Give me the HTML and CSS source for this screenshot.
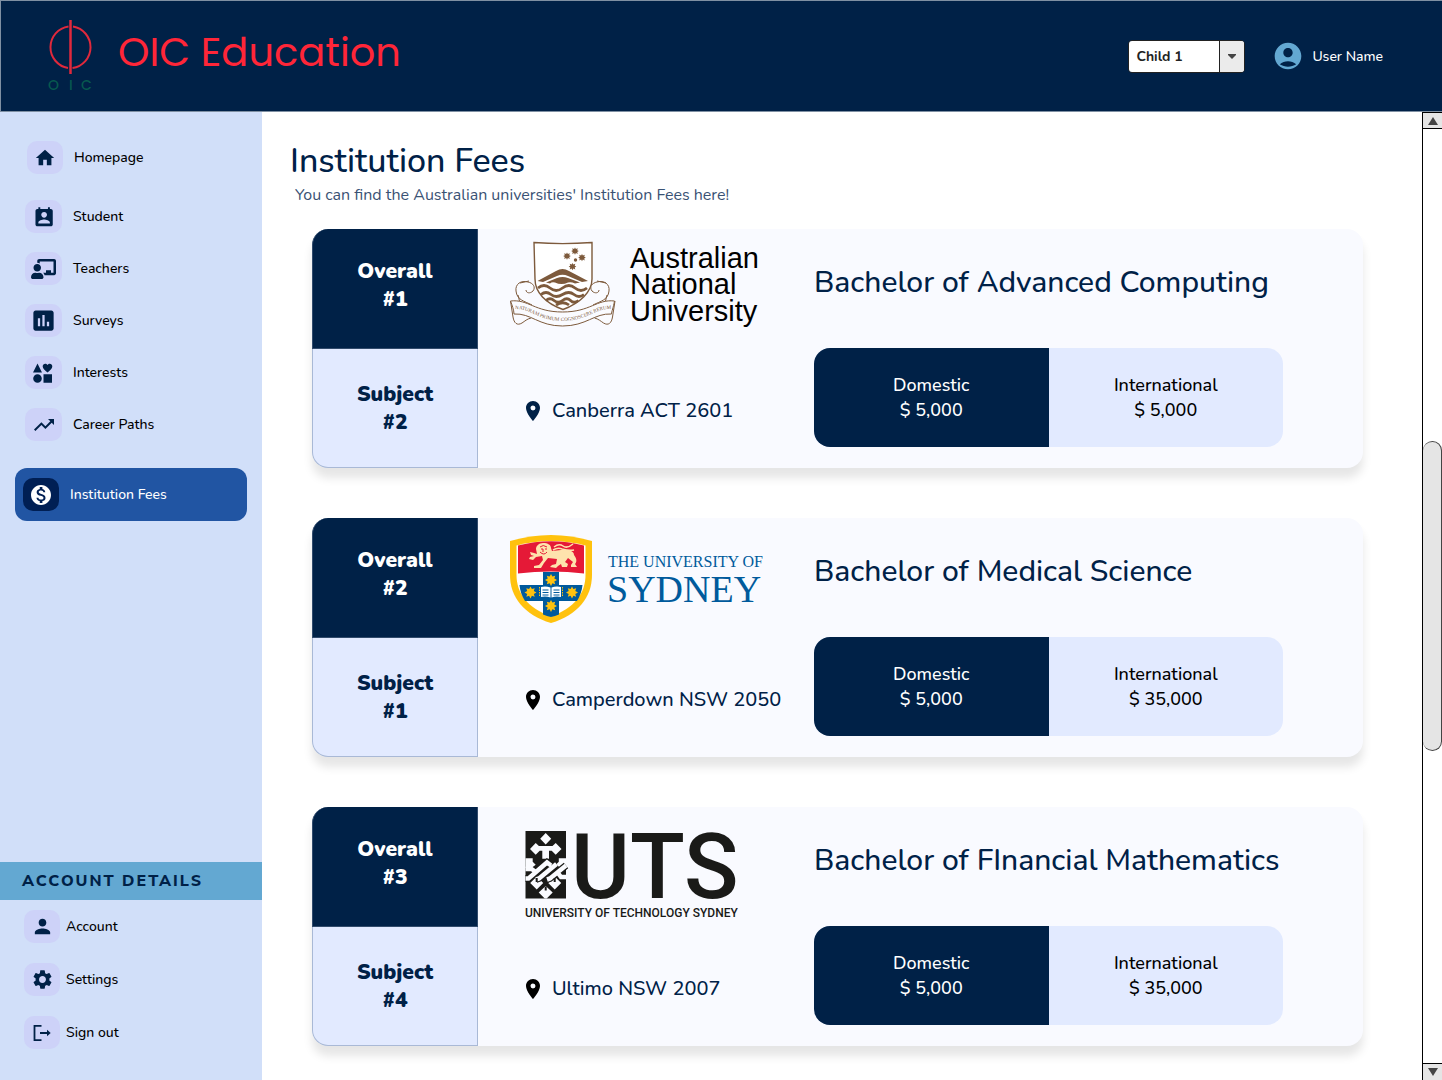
FILE: index.html
```html
<!DOCTYPE html>
<html lang="en">
<head>
<meta charset="utf-8">
<meta name="viewport" content="width=device-width, initial-scale=1">
<title>OIC Education - Institution Fees</title>
<link rel="stylesheet" href="styles.css">
</head>
<body>
<header class="topbar">
  <a class="brand" href="#">
    <svg class="brand-mark" viewBox="0 0 46 76" aria-hidden="true">
      <g fill="none" stroke="#e0293c" stroke-width="2"><path d="M20.500 6.500A21 21 0 0 0 20 48"/><path d="M25 6.500A21 21 0 0 1 24.500 48"/><path d="M22.500 0v54" stroke-width="2.500"/></g>
      <text class="brand-mark-text" x="0" y="70">O</text><text class="brand-mark-text" x="21" y="70">I</text><text class="brand-mark-text" x="33" y="70">C</text>
    </svg>
    <span class="brand-name">OIC Education</span>
  </a>
  <div class="select-box">
    <select class="child-select" aria-label="Child"><option>Child 1</option></select>
    <span class="select-arrow"><svg width="8" height="5" viewBox="0 0 8 5"><path d="M0 0h8v1L4 5 0 1z" fill="#444"/></svg></span>
  </div>
  <a class="user" href="#">
    <svg width="32" height="32" viewBox="0 0 24 24" fill="#63a8d2" aria-hidden="true"><path d="M12 2C6.480 2 2 6.480 2 12s4.480 10 10 10 10-4.480 10-10S17.520 2 12 2zm0 4c1.930 0 3.500 1.570 3.500 3.500S13.930 13 12 13s-3.500-1.570-3.500-3.500S10.070 6 12 6zm0 14c-2.030 0-4.430-.820-6.140-1.880C7.550 16.800 9.680 16 12 16s4.450.800 6.140 2.120C16.430 19.180 14.030 20 12 20z"/></svg>
    <span>User Name</span>
  </a>
</header>
<div class="shell">
  <aside class="sidebar">
    <nav class="nav">
      <a class="nav-item nav-home" href="#"><span class="nav-icon"><svg width="22" height="22" viewBox="0 0 24 24"><path d="M10 20v-6h4v6h5v-8h3L12 3 2 12h3v8z"/></svg></span>Homepage</a>
      <a class="nav-item" href="#"><span class="nav-icon"><svg width="24" height="24" viewBox="0 0 24 24"><path d="M19 3h-1V1h-2v2H8V1H6v2H5c-1.110 0-2 .900-2 2v14c0 1.100.890 2 2 2h14c1.100 0 2-.900 2-2V5c0-1.100-.900-2-2-2zm-7 3c1.660 0 3 1.340 3 3s-1.340 3-3 3-3-1.340-3-3 1.340-3 3-3zm6 12H6v-1c0-2 4-3.100 6-3.100s6 1.100 6 3.100v1z" transform="translate(.6 1.200) scale(.96)"/></svg></span>Student</a>
      <a class="nav-item" href="#"><span class="nav-icon"><svg width="25" height="20" viewBox="0 0 640 512"><path d="M208 352c-2.400 0-4.800.400-7.100 1.100C188 357.300 174.400 360 160 360s-28-2.700-40.900-6.900c-2.300-.700-4.700-1.100-7.100-1.100C49.900 352-.300 402.500 0 464.600.100 490.900 21.700 512 48 512h224c26.300 0 47.900-21.100 48-47.400.300-62.100-49.900-112.600-112-112.600zm-48-32c53 0 96-43 96-96s-43-96-96-96-96 43-96 96 43 96 96 96zM592 0H208c-26.500 0-48 22.200-48 49.600V96c23.400 0 45.100 6.800 64 17.800V64h352v288h-64v-64H384v64h-76.200c19.100 16.700 33.100 38.700 39.700 64H592c26.500 0 48-22.200 48-49.600V49.600C640 22.200 618.500 0 592 0z"/></svg></span>Teachers</a>
      <a class="nav-item" href="#"><span class="nav-icon"><svg width="27" height="27" viewBox="0 0 24 24"><path d="M19 3H5c-1.100 0-2 .900-2 2v14c0 1.100.900 2 2 2h14c1.100 0 2-.900 2-2V5c0-1.100-.900-2-2-2zM9 17H7v-7h2v7zm4 0h-2V7h2v10zm4 0h-2v-4h2v4z"/></svg></span>Surveys</a>
      <a class="nav-item" href="#"><span class="nav-icon"><svg width="22" height="22" viewBox="0 0 22 22"><path d="M4.500 1.500l4.500 9H0zM14.500 10.500c-2.500-2-4.800-3.800-4.800-6 0-2.800 3.300-3.600 4.800-1.400 1.500-2.200 4.800-1.400 4.800 1.400 0 2.200-2.300 4-4.800 6zM4.500 12.200a4.300 4.300 0 1 1 0 8.600 4.300 4.300 0 0 1 0-8.600zM10.500 12.200h8.500v8.500h-8.500z"/></svg></span>Interests</a>
      <a class="nav-item" href="#"><span class="nav-icon"><svg width="24" height="24" viewBox="0 0 24 24"><path d="M16 6l2.290 2.290-4.880 4.880-4-4L2 16.590 3.410 18l6-6 4 4 6.300-6.290L22 12V6z"/></svg></span>Career Paths</a>
      <a class="nav-item nav-active" href="#" aria-current="page"><span class="nav-icon"><svg width="24" height="24" viewBox="0 0 24 24"><path d="M12 2C6.480 2 2 6.480 2 12s4.480 10 10 10 10-4.480 10-10S17.520 2 12 2zm1.410 16.090V20h-2.670v-1.930c-1.710-.360-3.160-1.460-3.270-3.400h1.960c.100 1.050.820 1.870 2.650 1.870 1.960 0 2.400-.980 2.400-1.590 0-.830-.440-1.610-2.670-2.140-2.480-.600-4.180-1.620-4.180-3.670 0-1.720 1.390-2.840 3.110-3.210V4h2.670v1.950c1.860.450 2.790 1.860 2.850 3.390H14.300c-.050-1.110-.640-1.870-2.220-1.870-1.500 0-2.400.680-2.400 1.640 0 .840.650 1.390 2.670 1.910s4.180 1.390 4.180 3.910c-.010 1.830-1.380 2.830-3.120 3.160z"/></svg></span>Institution Fees</a>
    </nav>
    <section class="account">
      <h2 class="account-title">ACCOUNT DETAILS</h2>
      <nav class="account-nav">
        <a class="nav-item" href="#"><span class="nav-icon"><svg width="23" height="23" viewBox="0 0 24 24"><path d="M12 12c2.210 0 4-1.790 4-4s-1.790-4-4-4-4 1.790-4 4 1.790 4 4 4zm0 2c-2.670 0-8 1.340-8 4v2h16v-2c0-2.660-5.330-4-8-4z"/></svg></span>Account</a>
        <a class="nav-item" href="#"><span class="nav-icon"><svg width="23" height="23" viewBox="0 0 24 24"><path d="M19.140 12.940c.040-.300.060-.610.060-.940s-.020-.640-.070-.940l2.030-1.580a.490.490 0 0 0 .120-.610l-1.920-3.320a.488.488 0 0 0-.590-.220l-2.390.960c-.500-.380-1.030-.700-1.620-.940l-.360-2.540a.484.484 0 0 0-.480-.410h-3.840c-.240 0-.430.170-.470.410l-.360 2.540c-.590.240-1.130.570-1.620.940l-2.390-.960c-.220-.080-.470 0-.590.220L2.740 8.870c-.120.210-.080.470.120.610l2.030 1.580c-.050.300-.090.630-.090.940s.020.640.070.940l-2.030 1.580a.490.490 0 0 0-.120.610l1.920 3.320c.120.220.370.290.590.220l2.390-.960c.500.380 1.030.700 1.620.940l.360 2.540c.050.240.240.410.480.410h3.840c.240 0 .440-.170.470-.410l.360-2.540c.590-.240 1.130-.560 1.620-.940l2.390.960c.220.080.470 0 .590-.220l1.920-3.320c.120-.220.070-.470-.120-.610l-2.010-1.580zM12 15.600A3.610 3.610 0 0 1 8.400 12c0-1.980 1.620-3.600 3.600-3.600s3.600 1.620 3.600 3.600-1.620 3.600-3.600 3.600z"/></svg></span>Settings</a>
        <a class="nav-item" href="#"><span class="nav-icon"><svg width="20" height="18" viewBox="0 0 20 18"><path d="M9.500 1.900H2.500v14.300h7M8 9h8" fill="none" stroke="#002147" stroke-width="1.800"/><path d="M15 5.800L18.700 9 15 12.200z"/></svg></span>Sign out</a>
      </nav>
    </section>
  </aside>
  <main class="content">
    <h1 class="page-title">Institution Fees</h1>
    <p class="page-sub">You can find the Australian universities' Institution Fees here!</p>
    <div class="cards">
      <article class="card">
        <div class="ranks">
          <p class="rank rank-overall">Overall<br>#1</p>
          <p class="rank rank-subject">Subject<br>#2</p>
        </div>
        <div class="place">
          <svg class="logo" width="260" height="100" viewBox="0 0 260 100" role="img" aria-label="Australian National University">
            <g transform="translate(0 -2)">
              <g fill="#fafbff" stroke="#7d5a3c" stroke-width="1">
                <path d="M24 3.500c19 1.500 38 1.500 58 0V40c0 13-12 24-29 30.500C35 64 25 53 25 40z" fill="#fff" stroke-width="1.400"/>
                <path d="M22 66C14 62 7 61 6 52c-1-7 5-11 12-9 5 1 8 5 5 9-3 3-7 2-7-1M83 66c8-4 15-5 16-14 1-7-5-11-12-9-5 1-8 5-5 9 3 3 7 2 7-1"/>
                <path d="M10 44l9-2M96 44l-9-2M8 56l2 8M97 56l-2 8" fill="none"/>
                <path d="M0.500 62L3 78c1 6 4 9 9 6 3-2 5-4 9-5M105 62l-2.500 16c-1 6-4 9-9 6-3-2-5-4-9-5"/>
                <path d="M0.500 62c18-2 24 11 52 11s34-13 52-11c-1 6-3 11-3 13-17-1-25 12-49 12S21 74 4 75c0-4-2-9-3.500-13z"/>
              </g>
              <g fill="#7d5a3c">
                <path d="M27.500 42l18.500-10q6.500-4 13 0l19 10-6 1-14-6q-5.500-2.500-11 0l-14 6z"/>
                <path d="M36 43.500l11-4.500q5.500-2 11 0l12 4.500-5 1q-4-2-7-1-6.500 3-13 0-3-1-5 1z"/>
                <path id="anu-star" d="M0-3.600l.900 1.700 1.900-.900-.600 2 1.600.8-1.600.9.600 2-1.900-.9-.900 1.700-.900-1.700-1.900.9.600-2-1.600-.9 1.600-.8-.600-2 1.900.9z" transform="translate(65 12)"/>
                <use href="#anu-star" x="-8" y="5"/><use href="#anu-star" x="7" y="6.500"/><use href="#anu-star" x="-2.500" y="15.500"/><circle cx="65.500" cy="21" r="1.700"/>
              </g>
              <g fill="none" stroke="#7d5a3c" stroke-width="2.800"><path d="M28 49q6-5 12 0t12.500 0 12.500 0 12 0"/><path d="M31 55.500q5-4 10 0t11.500 0 11.500 0 10 0"/><path d="M36 61.500q4-3.500 8 0t8.500 0 8 0 8 0"/><path d="M46 66q7-4.500 13 0"/></g>
              <path id="anu-motto" d="M3 70c18-1 25 12 49.500 12S84 69 103 70" fill="none"/>
              <text class="anu-motto"><textPath href="#anu-motto" startOffset="2">NATURAM PRIMUM COGNOSCERE RERUM</textPath></text>
            </g>
            <g class="anu-name"><text x="120" y="27">Australian</text><text x="120" y="53">National</text><text x="120" y="80">University</text></g>
          </svg>
          <p class="address"><svg width="24" height="24" viewBox="0 0 24 24" fill="#002147" aria-hidden="true"><path d="M12 2C8.130 2 5 5.130 5 9c0 5.250 7 13 7 13s7-7.750 7-13c0-3.870-3.130-7-7-7zm0 9.500a2.500 2.500 0 0 1 0-5 2.500 2.500 0 0 1 0 5z"/></svg>Canberra ACT 2601</p>
        </div>
        <div class="degree">
          <h2 class="degree-name">Bachelor of Advanced Computing</h2>
          <div class="fees"><p class="fee fee-domestic">Domestic<br>$ 5,000</p><p class="fee">International<br>$ 5,000</p></div>
        </div>
      </article>
      <article class="card">
        <div class="ranks">
          <p class="rank rank-overall">Overall<br>#2</p>
          <p class="rank rank-subject">Subject<br>#1</p>
        </div>
        <div class="place">
          <svg class="logo" width="260" height="100" viewBox="0 0 260 100" role="img" aria-label="The University of Sydney">
            <g transform="translate(0 5)">
              <path d="M0 6q41-12 82 0v34c0 22-14 40-41 48C14 80 0 62 0 40z" fill="#ffc20e"/>
              <path d="M6.500 10.500q34.500-9 69 0V40c0 18-11 33-34.500 41.500C17.500 73 6.500 58 6.500 40z" fill="#fff"/>
              <path d="M8 10.500q33-8.500 66 0v28q-33-4-66 0z" fill="#e51937"/>
              <path d="M33 37h16v13h23.500c-.500 6-3 12-5.500 16H49v13.500q-4 1.500-8 2.500-4-1-8-2.500V66H15c-3-5-5-10-5.500-16H33z" fill="#005a9c"/>
              <g fill="#ffc20e">
                <path id="syd-star" d="M0-6l1.400 2.600 2.800-.9-.9 2.800L6 0 3.300 1.400l.9 2.800-2.800-.9L0 6l-1.400-2.700-2.800.9.900-2.800L-6 0l2.700-1.500-.9-2.800 2.800.9z" transform="translate(41 45)"/>
                <use href="#syd-star" x="-20.500" y="12.500"/><use href="#syd-star" x="21" y="12.500"/><use href="#syd-star" x="0" y="26"/>
              </g>
              <path d="M31 52q5-1 9.500.5v10q-4.500-1.500-9.500-.5zM51 52q-5-1-9.500.5v10q4.500-1.500 9.500-.5z" fill="#fff"/>
              <path d="M32.500 55h6M32.500 57.500h6M32.500 60h6M43.500 55h6M43.500 57.500h6M43.500 60h6" stroke="#005a9c" stroke-width="1"/>
              <path d="M29.500 52v10M52.500 52v10" stroke="#ffc20e" stroke-dasharray="1.500 1"/>
              <g fill="#fee3ad">
                <path d="M26 14c0-3 3-6 7-6 5 0 8 2 8 5l1 3 9-1c8-1 13 1 13 5 3 4 3 7 1 9l2 3h-6v-2l2-3-5-4-3 4 3 2-1 3h-5l-1-3-3 2-2 2-6-1 2-2 4-1 1-5-9-1-4 5-3 5h-7v-2l5-1 4-5-1-4-6 1-3 3-4-1 1-2 4-1-3-1-1-3 4 1 3 1z"/>
                <path d="M44 12q5-4 9-1t10-2M43 15q5-3 9-1 7 2 12 1" fill="none" stroke="#fee3ad" stroke-width="1.500"/>
              </g>
              <path d="M30 12q3-3 7 0M31 14h2M35 14h2M33 14v3M30 17q4 4 7 0" stroke="#e51937" fill="none"/>
              <g class="syd-name"><text class="syd-small" x="98" y="32">THE UNIVERSITY OF</text><text class="syd-large" x="97" y="67">SYDNEY</text></g>
            </g>
          </svg>
          <p class="address"><svg width="24" height="24" viewBox="0 0 24 24" aria-hidden="true"><path d="M12 2C8.130 2 5 5.130 5 9c0 5.250 7 13 7 13s7-7.750 7-13c0-3.870-3.130-7-7-7zm0 9.500a2.500 2.500 0 0 1 0-5 2.500 2.500 0 0 1 0 5z"/></svg>Camperdown NSW 2050</p>
        </div>
        <div class="degree">
          <h2 class="degree-name">Bachelor of Medical Science</h2>
          <div class="fees"><p class="fee fee-domestic">Domestic<br>$ 5,000</p><p class="fee">International<br>$ 35,000</p></div>
        </div>
      </article>
      <article class="card">
        <div class="ranks">
          <p class="rank rank-overall">Overall<br>#3</p>
          <p class="rank rank-subject">Subject<br>#4</p>
        </div>
        <div class="place">
          <svg class="logo" width="260" height="100" viewBox="0 0 260 100" role="img" aria-label="University of Technology Sydney">
            <path d="M15.500 12H56v67.500H15.500z" fill="#1a1a18"/>
            <g fill="#fafbff">
              <path d="M35.700 14l5.500 5.700-5.500 5.700-5.500-5.700zM25.700 24l3.200 3h13.600l3.200-3 5.800 6-5.800 5.800-4-4.100H39v8h-6.700v-8h-2.600l-4 4.100L20 30z"/>
              <path d="M15.500 39.300h7.200v3.500l3 3-4 3h-6.200zM56 39.300h-7.200v3.500l-3 3 4 3H56z"/>
              <path d="M26.700 57.500l6.500 6.500-6.500 6.500-6.500-6.500zM44.700 57.500l6.500 6.500-6.500 6.500-6.500-6.500zM35.700 67l7 6.500-6 6h-2l-6-6z"/>
            </g>
            <path d="M15.500 59.500h3L37 43.500l4 3M26 60.500l3-1L46.500 45M37 60.500l3-1L56 46.500" fill="none" stroke="#1a1a18" stroke-width="7"/>
            <path d="M15.500 59.500h3L37 43.500l4 3M26 60.500l3-1L46.500 45M37 60.500l3-1L56 46.500M15.500 50h6l3 2M48 54l3 4h5" fill="none" stroke="#fafbff" stroke-width="4.500"/>
            <path d="M26.700 59v4M44.700 59v4M35.700 67.500v4" stroke="#1a1a18" stroke-width="2"/>
            <text class="uts-name" x="61" y="79">UTS</text>
            <text class="uts-sub" x="15" y="98">UNIVERSITY OF TECHNOLOGY SYDNEY</text>
          </svg>
          <p class="address"><svg width="24" height="24" viewBox="0 0 24 24" aria-hidden="true"><path d="M12 2C8.130 2 5 5.130 5 9c0 5.250 7 13 7 13s7-7.750 7-13c0-3.870-3.130-7-7-7zm0 9.500a2.500 2.500 0 0 1 0-5 2.500 2.500 0 0 1 0 5z"/></svg>Ultimo NSW 2007</p>
        </div>
        <div class="degree">
          <h2 class="degree-name">Bachelor of FInancial Mathematics</h2>
          <div class="fees"><p class="fee fee-domestic">Domestic<br>$ 5,000</p><p class="fee">International<br>$ 35,000</p></div>
        </div>
      </article>
    </div>
  </main>
  <div class="scroll" aria-hidden="true">
    <span class="scroll-end"><svg width="10" height="8" viewBox="0 0 10 8"><path d="M5 0l5 8H0z" fill="#444"/></svg></span>
    <span class="scroll-thumb"></span>
    <span class="scroll-end scroll-down"><svg width="10" height="8" viewBox="0 0 10 8"><path d="M5 8l5-8H0z" fill="#444"/></svg></span>
  </div>
</div>
</body>
</html>
```
FILE: styles.css
```css
* { box-sizing: border-box; }
body {
  margin: 0;
  min-height: 100vh;
  display: flex;
  flex-direction: column;
  background: #fff;
  color: #002147;
  font-family: Nunito, Lato, sans-serif;
  font-size: 14px;
  font-weight: 500;
}
h1, h2, p { margin: 0; }
a { color: inherit; text-decoration: none; }
svg { display: block; flex: none; overflow: visible; }

.topbar {
  height: 112px;
  display: flex;
  align-items: center;
  padding: 0 59px 0 47px;
  background: #002147;
  border: 1px solid #7f90a3;
  border-right: 0;
  color: #fff;
}
.brand { display: flex; align-items: center; gap: 24px; margin-right: auto; }
.brand-mark { width: 46px; height: 76px; margin-top: 4px; }
.brand-mark-text { font: 500 14px Poppins, Inter, sans-serif; fill: #07594f; }
.brand-name { font: 400 40px/60px Poppins, Inter, sans-serif; color: #ff2638; padding-bottom: 8px; }

.select-box {
  display: flex;
  width: 117px;
  height: 33px;
  margin-right: 27px;
  background: #fff;
  border: 1px solid #222;
  border-radius: 4px;
  position: relative;
  overflow: hidden;
}
.child-select {
  width: 100%;
  padding: 0 32px 0 7px;
  border: 0;
  appearance: none;
  background: #fff;
  color: #222;
  font: inherit;
  font-weight: 700;
}
.select-arrow {
  position: absolute;
  inset: 0 0 0 auto;
  width: 25px;
  display: grid;
  place-items: center;
  background: #ebebeb;
  border-left: 1px solid #222;
  pointer-events: none;
}
.user { display: flex; align-items: center; gap: 8px; }

.shell { flex: 1; display: flex; }
.sidebar {
  width: 262px;
  flex: none;
  display: flex;
  flex-direction: column;
  background: #d1dff9;
  color: #000;
}
.nav { display: flex; flex-direction: column; gap: 19px; padding: 29px 15px 0; }
.nav-item { display: flex; align-items: center; gap: 11px; height: 33px; padding-left: 10px; }
.nav-icon {
  width: 37px;
  height: 33px;
  display: grid;
  place-items: center;
  background: #cdd2f8;
  border-radius: 10px;
  fill: #002147;
}
.nav-home .nav-icon, .nav-active .nav-icon, .account .nav-icon { width: 36px; }
.nav-home { padding-left: 12px; margin-bottom: 7px; }
.nav-active {
  height: 53px;
  margin-top: 8px;
  padding-left: 8px;
  background: #2155a3;
  border-radius: 12px;
  color: #fff;
}
.nav-active .nav-icon { background: #001f54; fill: #fff; }
.account { margin-top: auto; padding-bottom: 31px; }
.account-title {
  padding: 0 22px;
  background: #63a8d2;
  color: #002147;
  font-family: "Nunito Sans", Nunito, Lato, sans-serif;
  font-size: 16px;
  line-height: 38px;
  font-weight: 800;
  letter-spacing: 2px;
}
.account-nav { display: flex; flex-direction: column; gap: 20px; padding: 10px 14px 0; }
.account-nav .nav-item { gap: 6px; }

.content { flex: 1; min-width: 0; padding: 27px 59px 33px 28px; }
.page-title { font-size: 34px; line-height: 44px; font-weight: 500; }
.page-sub { padding-left: 5px; font-size: 16px; line-height: 24px; font-weight: 400; color: #3a5274; }
.cards { display: flex; flex-direction: column; gap: 50px; padding: 22px 0 0 22px; }
.card {
  display: grid;
  grid-template-columns: 166px 336px 1fr;
  min-height: 239px;
  background: #f9faff;
  border-radius: 16px;
  box-shadow: 0 10px 10px #e6e6e6;
}
.ranks { display: grid; grid-template-rows: 1fr 1fr; }
.rank {
  display: grid;
  place-content: center;
  text-align: center;
  font-size: 21px;
  line-height: 28px;
  font-weight: 900;
  border: 1px solid #a9b9d6;
  border-top: 0;
}
.rank-overall { background: #002147; color: #fff; border-radius: 16px 0 0 0; border-color: #314b6c; padding-bottom: 6px; }
.rank-subject { background: #e2eaff; border-radius: 0 0 0 16px; }
.place { display: flex; flex-direction: column; justify-content: space-between; padding: 12px 0 43px 32px; }
.address { display: flex; align-items: center; gap: 7px; padding-left: 11px; font-size: 20px; line-height: 28px; }
.degree { display: flex; flex-direction: column; justify-content: space-between; padding: 34px 80px 21px 0; }
.degree-name { font-size: 30px; line-height: 40px; font-weight: 500; white-space: nowrap; }
.fees { display: grid; grid-template-columns: 1fr 1fr; border-radius: 16px; overflow: hidden; background: #e2eaff; color: #000; }
.fee { padding: 25px 0 24px; text-align: center; font-size: 18px; line-height: 25px; }
.fee-domestic { background: #002147; color: #fff; }

.anu-motto { font: 400 5px "Liberation Serif", serif; fill: #7d5a3c; }
.anu-name { font: 400 29px "Liberation Sans", sans-serif; fill: #000; }
.syd-name { font-family: "Liberation Serif", serif; fill: #005a9c; }
.syd-small { font-size: 16px; }
.syd-large { font-size: 38px; }
.uts-name { font: 500 90px Roboto, sans-serif; fill: #1a1a18; }
.uts-sub { font: 500 12px Roboto, sans-serif; fill: #1a1a18; }

.scroll {
  width: 20px;
  flex: none;
  display: flex;
  flex-direction: column;
  justify-content: space-between;
  border-left: 1px solid #000;
}
.scroll-end { height: 17px; display: grid; place-items: center; background: #e5e5e5; border: 1px solid #000; border-width: 1px 0; }
.scroll-down { border-bottom: 0; }
.scroll-thumb { height: 32%; background: #e5e5e5; border: 1px solid #444; border-width: 1px 1px 1px 0; border-radius: 10px; }
```
